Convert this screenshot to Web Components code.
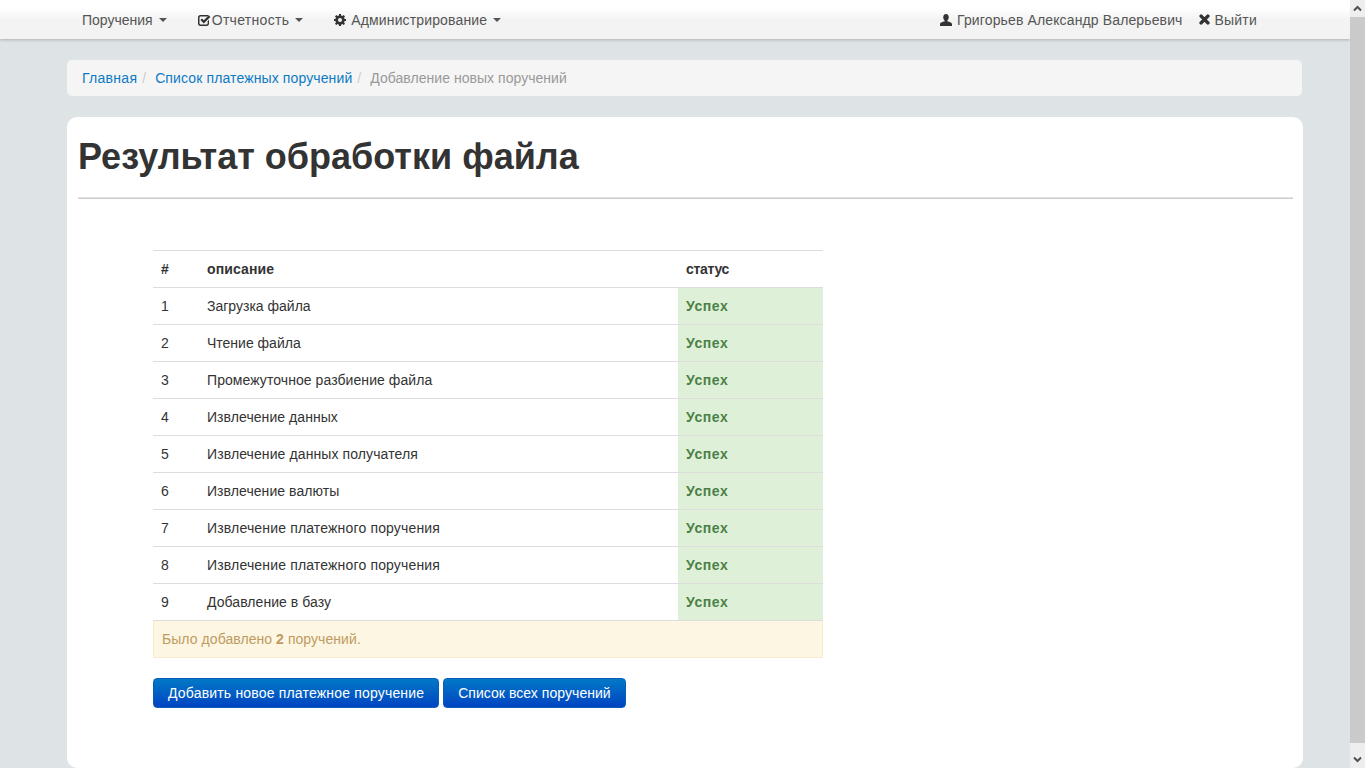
<!DOCTYPE html>
<html lang="ru">
<head>
<meta charset="utf-8">
<title>Результат обработки файла</title>
<style>
  html, body { margin: 0; padding: 0; background: #fff; height: 777px; overflow: hidden; }
  body { font: 14px/20px "Liberation Sans", Arial, sans-serif; color: #333; }
</style>
</head>
<body>
<app-shell>
  <top-nav slot="nav">
    <nav-item caret>Поручения</nav-item>
    <nav-item caret icon="check" tight style="letter-spacing:.3px">Отчетность</nav-item>
    <nav-item caret icon="cog" style="letter-spacing:.14px">Администрирование</nav-item>
    <nav-item slot="right" icon="user" style="letter-spacing:.13px;padding-right:0">Григорьев Александр Валерьевич</nav-item>
    <nav-item slot="right" icon="times" style="letter-spacing:.2px">Выйти</nav-item>
  </top-nav>
  <bread-crumbs>
    <a href="#" style="letter-spacing:.28px">Главная</a>
    <a href="#" style="letter-spacing:.12px">Список платежных поручений</a>
    <span style="letter-spacing:.04px">Добавление новых поручений</span>
  </bread-crumbs>
  <result-card heading="Результат обработки файла">
    <result-table>
      <result-row n="1">Загрузка файла</result-row>
      <result-row n="2">Чтение файла</result-row>
      <result-row n="3" style="letter-spacing:.07px">Промежуточное разбиение файла</result-row>
      <result-row n="4" style="letter-spacing:.06px">Извлечение данных</result-row>
      <result-row n="5" style="letter-spacing:.1px">Извлечение данных получателя</result-row>
      <result-row n="6" style="letter-spacing:.06px">Извлечение валюты</result-row>
      <result-row n="7" style="letter-spacing:.16px">Извлечение платежного поручения</result-row>
      <result-row n="8" style="letter-spacing:.16px">Извлечение платежного поручения</result-row>
      <result-row n="9" style="letter-spacing:.06px">Добавление в базу</result-row>
      <span slot="summary">Было добавлено <b>2</b> поручений.</span>
    </result-table>
    <div slot="actions">
      <blue-button style="letter-spacing:.18px">Добавить новое платежное поручение</blue-button>
      <blue-button style="letter-spacing:.05px">Список всех поручений</blue-button>
    </div>
  </result-card>
</app-shell>

<script>
const ICONS = {
  check: `<svg width="13" height="12" viewBox="0 0 13 12"><path fill="currentColor" d="M2.2 1H9.4c.5 0 .9.1 1.3.3L9.5 2.5H2.4c-.5 0-.9.4-.9.9v6.2c0 .5.4.9.9.9h6.3c.5 0 .9-.4.9-.9V7.2L11 5.8v3.9C11 10.9 10 12 8.800 12H2.200C1 12 0 10.900 0 9.700V3.300C0 2 1 1 2.200 1z"/><path fill="none" stroke="currentColor" stroke-width="2.200" d="M3.200 5.300 5.800 7.900 11.600 2.100"/></svg>`,
  cog: `<svg width="12" height="12" viewBox="0 0 12 12"><path fill="currentColor" fill-rule="evenodd" d="M5 0h2l.3 1.700 1 .4L9.700 1.100 11 2.400 10 3.800l.4 1 1.600.3v1.900l-1.600.3-.4 1 1 1.400-1.300 1.300-1.400-1-1 .4L7 12H5l-.3-1.600-1-.4-1.400 1L1 9.700 2 8.300l-.4-1L0 7V5.100l1.600-.3.4-1-1-1.400L2.300 1.100l1.400 1 1-.4zM6 4a2 2 0 1 0 0 4 2 2 0 0 0 0-4z"/></svg>`,
  user: `<svg width="12" height="12" viewBox="0 0 13 13"><path fill="currentColor" d="M6.500 0C8.400 0 9.500 1.500 9.500 3.500c0 1.400-.6 2.700-1.400 3.400v1c0 .5 4.900 1 4.900 3V13H0v-2.100c0-2 4.900-2.500 4.900-3v-1C4.100 6.200 3.500 4.900 3.500 3.500 3.500 1.500 4.600 0 6.500 0z"/></svg>`,
  times: `<svg width="11" height="11" viewBox="0 0 12 12"><path fill="none" stroke="currentColor" stroke-width="3.800" stroke-linecap="round" d="M2.300 2.300 9.700 9.700M9.700 2.300 2.300 9.700"/></svg>`,
};

function define(name, css, html, extra) {
  const tpl = document.createElement("template");
  tpl.innerHTML = `<style>${css}</style>${html}`;
  customElements.define(name, class extends HTMLElement {
    constructor() {
      super();
      this.attachShadow({ mode: "open" }).append(tpl.content.cloneNode(true));
    }
    connectedCallback() {
      if (extra) extra.call(this, this.shadowRoot);
    }
  });
}

define("app-shell", `
  :host { display: block; width: 1366px; height: 768px; overflow: hidden; }
  #frame { display: flex; height: 768px; }
  #page { width: 1350px; height: 768px; overflow: hidden; background: #dee3e6; flex: none; }
  #bar { width: 15px; flex: none; background: #eee; display: flex; flex-direction: column; align-items: stretch; }
  .arrow { height: 17px; flex: none; display: flex; align-items: center; justify-content: center; color: #505050; }
  #thumb { height: 726px; flex: none; background: #cacaca; }
  #track { flex: 1; }
`, `
  <div id="frame">
    <div id="page"><slot name="nav"></slot><slot></slot></div>
    <div id="bar">
      <div class="arrow"><svg width="9" height="7" viewBox="0 0 9 7"><path fill="none" stroke="currentColor" stroke-width="2" d="M1 5.500 4.500 2 8 5.500"/></svg></div>
      <div id="thumb"></div>
      <div id="track"></div>
      <div class="arrow"><svg width="9" height="7" viewBox="0 0 9 7"><path fill="none" stroke="currentColor" stroke-width="2" d="M1 1.500 4.500 5 8 1.500"/></svg></div>
    </div>
  </div>
`);

define("top-nav", `
  :host { display: block; height: 39px; background: linear-gradient(to bottom, #fff 0, #fff 8px, #f3f3f3 20px, #f3f3f3 100%); box-shadow: 0 1px 3px rgba(0,0,0,.22); position: relative; }
  nav { display: flex; justify-content: space-between; height: 39px; padding: 0 78px 0 67px; box-sizing: border-box; width: 1350px; }
  div { display: flex; gap: 1px; }
`, `<nav><div><slot></slot></div><div><slot name="right"></slot></div></nav>`);

define("nav-item", `
  :host { display: flex; align-items: center; height: 39px; padding: 0 15px; color: #555; white-space: nowrap; }
  #icon { color: #333; display: inline-flex; margin-right: 5px; }
  :host([tight]) #icon { margin-right: 1px; }
  #icon:empty { display: none; }
  #caret { display: none; width: 0; height: 0; margin-left: 6px; margin-top: 1px; border-top: 4px solid #555; border-left: 4px solid transparent; border-right: 4px solid transparent; }
  :host([caret]) #caret { display: inline-block; }
`, `<span id="icon"></span><slot></slot><span id="caret"></span>`, function (root) {
  const icon = this.getAttribute("icon");
  if (icon) root.querySelector("#icon").innerHTML = ICONS[icon];
});

define("bread-crumbs", `
  :host { display: flex; height: 36px; align-items: center; box-sizing: border-box; margin: 21px 48px 0 67px; padding: 0 15px; background: #f5f5f5; border-radius: 5px; color: #999; }
  ::slotted(a) { color: #0d7ac4; text-decoration: none; }
  ::slotted(*:not(:last-child))::after { content: "/"; color: #ccc; padding: 0 9px 0 5px; display: inline-block; letter-spacing: 0; }
`, `<slot></slot>`);

define("result-card", `
  :host { display: block; height: 651px; margin: 21px 47px 0 67px; padding: 0 10px 0 11px; background: #fff; border-radius: 10px; }
  h1 { margin: 0; padding-top: 20px; height: 61px; font-size: 36px; line-height: 40px; font-weight: bold; color: #333; border-bottom: 1px solid #ccc; box-shadow: inset 0 -1px 0 #e4e4e4; }
  #body { padding: 51px 0 0 75px; }
  #actions { margin-top: 20px; }
`, `<h1></h1><div id="body"><slot></slot><div id="actions"><slot name="actions"></slot></div></div>`, function (root) {
  root.querySelector("h1").textContent = this.getAttribute("heading");
});

define("result-table", `
  :host { display: block; width: 670px; }
  #head { display: grid; grid-template-columns: 46px 479px 1fr; height: 37px; box-sizing: border-box; border-top: 1px solid #ddd; font-weight: bold; align-items: center; color: #333; }
  #head span { padding-left: 8px; }
  #head span:nth-child(2) { letter-spacing: .12px; }
  #head span:nth-child(3) { letter-spacing: -.3px; }
  #summary { display: block; height: 38px; box-sizing: border-box; background: #fcf6e3; color: #c09b60; border: 1px solid #faebcc; border-top-color: #ddd; padding: 8px; line-height: 20px; letter-spacing: .06px; }
`, `
  <div id="head"><span>#</span><span>описание</span><span>статус</span></div>
  <slot></slot>
  <div id="summary"><slot name="summary"></slot></div>
`);

define("result-row", `
  :host { display: grid; grid-template-columns: 46px 479px 1fr; height: 37px; box-sizing: border-box; border-top: 1px solid #ddd; line-height: 36px; color: #333; }
  span { padding-left: 8px; }
  #status { background: #dff0d8; color: #4b8047; font-weight: bold; letter-spacing: .6px; }
`, `<span id="n"></span><span><slot></slot></span><span id="status">Успех</span>`, function (root) {
  root.querySelector("#n").textContent = this.getAttribute("n");
});

define("blue-button", `
  :host { display: inline-flex; align-items: center; height: 30px; box-sizing: border-box; padding: 0 14px; color: #fff; border: 1px solid #0a5fb4; border-radius: 4px; background: linear-gradient(to bottom, #0279c6 0, #0044c2 100%); white-space: nowrap; vertical-align: top; }
`, `<slot></slot>`);
</script>
</body>
</html>
